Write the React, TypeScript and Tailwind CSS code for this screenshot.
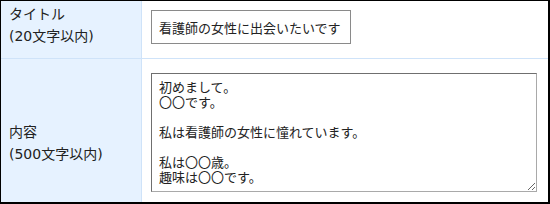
const font = "font-['Meiryo','DejaVu_Sans','Noto_Sans_CJK_JP',sans-serif]";

const body = `初めまして。
〇〇です。

私は看護師の女性に憧れています。

私は〇〇歳。
趣味は〇〇です。`;

export default function App() {
  return (
    <div
      className={`${font} h-[204px] w-[550px] border-t border-l border-r-2 border-b-2 border-black bg-white text-[13px] text-[#222]`}
    >
      <div className="grid h-full grid-cols-[141px_1fr] grid-rows-[58px_1fr]">
        <div className="border-r border-b border-[#cfe3f9] bg-[#e6f2ff] pt-[2px] pl-[8px] text-[14px] leading-[22px]">
          <p>タイトル</p>
          <p>(20文字以内)</p>
        </div>
        <div className="border-b border-[#cfe3f9] pt-[9px] pl-[9px]">
          <input
            type="text"
            defaultValue="看護師の女性に出会いたいです"
            className={`${font} h-[34px] w-[200px] border border-[#8a8a8a] px-[7px] text-[13px] text-[#222] outline-none`}
          />
        </div>
        <div className="border-r border-[#cfe3f9] bg-[#e6f2ff] pt-[62px] pl-[8px] text-[14px] leading-[22px]">
          <p>内容</p>
          <p>(500文字以内)</p>
        </div>
        <div className="pt-[14px] pl-[9px]">
          <textarea
            defaultValue={body}
            className={`${font} block h-[119px] w-[386px] border border-t-[#6f6f6f] border-l-[#6f6f6f] border-r-[#a9a9a9] border-b-[#a9a9a9] px-[7px] pt-[6px] text-[13px] leading-[15px] text-[#222] outline-none`}
          />
        </div>
      </div>
    </div>
  );
}
